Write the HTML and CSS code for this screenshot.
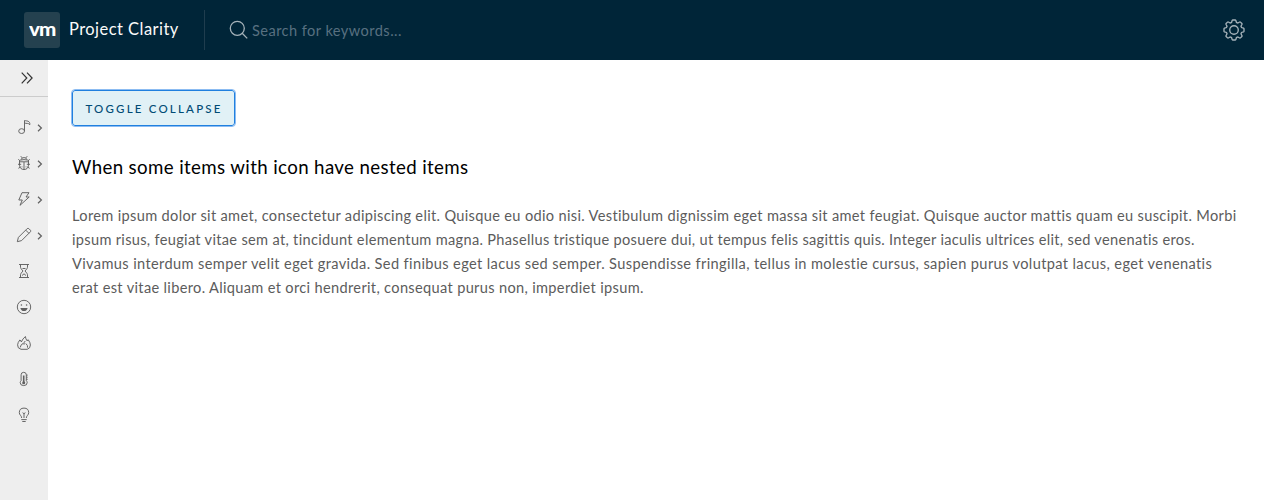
FILE: index.html
```
<!DOCTYPE html>
<html lang="en">
<head>
<meta charset="utf-8">
<title>Project Clarity</title>
<link rel="stylesheet" href="styles.css">
</head>
<body>
<header class="header">
  <a class="branding"><span class="logo"><span class="logo-text">vm</span></span><span class="title">Project Clarity</span></a>
  <div class="search">
    <svg class="search-icon" viewBox="0 0 20 20"><circle cx="8.3" cy="8.3" r="7"/><path d="M13.2 13.2L18.2 18.4"/></svg>
    <span class="placeholder">Search for keywords...</span>
  </div>
  <svg class="settings" viewBox="0 0 36 36"><circle cx="18" cy="18" r="6.4"/><path d="M32.3 15.2L29.3 14.3L28.5 12.3L30 9.5Q30.3 8.8 29.8 8.3L27.7 6.2Q27.2 5.7 26.5 6L23.7 7.5L21.7 6.7L20.8 3.7Q20.5 3 19.7 3H16.3Q15.5 3 15.2 3.7L14.3 6.7L12.3 7.5L9.5 6Q8.8 5.7 8.3 6.2L6.2 8.3Q5.7 8.8 6 9.5L7.5 12.3L6.7 14.3L3.7 15.2Q3 15.5 3 16.3V19.7Q3 20.5 3.7 20.8L6.7 21.7L7.5 23.7L6 26.5Q5.7 27.2 6.2 27.7L8.3 29.8Q8.8 30.3 9.5 30L12.3 28.5L14.3 29.3L15.2 32.3Q15.5 33 16.3 33H19.7Q20.5 33 20.8 32.3L21.7 29.3L23.7 28.5L26.5 30Q27.2 30.3 27.7 29.8L29.8 27.7Q30.3 27.2 30 26.5L28.5 23.7L29.3 21.7L32.3 20.8Q33 20.5 33 19.7V16.3Q33 15.5 32.3 15.2Z"/></svg>
</header>
<div class="layout">
  <nav class="sidenav">
    <div class="trigger"><svg viewBox="0 0 12 12"><path d="M.7.7L5.8 6L.7 11.3M6 .7L11.1 6L6 11.3"/></svg></div>
    <ul class="items">
      <li class="item"><svg class="icon" viewBox="0 0 16 16"><ellipse cx="5.6" cy="12.1" rx="2.9" ry="2.4"/><path d="M8.5 12.1V1.5C10.3 2.2 14.3 1.3 13.8 5.8M8.5 4C10.3 4.8 12.5 3.7 13.8 5.8"/></svg><svg class="caret" viewBox="0 0 6 8"><path d="M1 .8L4.4 4L1 7.2"/></svg></li>
      <li class="item"><svg class="icon" viewBox="0 0 16 16"><path d="M5.3 4.6Q5.3 2.6 8 2.6T10.7 4.6M4.8 1.2L6 2.8M11.2 1.2L10 2.8M3.5 5.2Q8 4 12.5 5.2V10.2Q12 14.5 8 14.5T3.5 10.2ZM3.5 6.8H12.5M8 7V14.3M2.3 4.3L3.5 5.5M13.7 4.3L12.5 5.5M2 9.3H5.2M10.8 9.3H14M2.4 13.3L4.5 12M13.6 13.3L11.5 12M6 11.5V12.3M10 11.5V12.3"/></svg><svg class="caret" viewBox="0 0 6 8"><path d="M1 .8L4.4 4L1 7.2"/></svg></li>
      <li class="item"><svg class="icon" viewBox="0 0 16 16"><path d="M6 1.7H13L10 6H13.2L4 14.3L6.3 9H2.8Z"/></svg><svg class="caret" viewBox="0 0 6 8"><path d="M1 .8L4.4 4L1 7.2"/></svg></li>
      <li class="item"><svg class="icon" viewBox="0 0 16 16"><path d="M2.4 10.4L11.2 1.6Q12 .9 12.8 1.6L14.5 3.3Q15.1 4 14.5 4.7L5.6 13.6L1.3 14.7ZM9.7 3.1L12.9 6.3"/></svg><svg class="caret" viewBox="0 0 6 8"><path d="M1 .8L4.4 4L1 7.2"/></svg></li>
      <li class="item"><svg class="icon" viewBox="0 0 16 16"><path d="M3 1.5H13M3 14.5H13M4.5 1.5V4.3Q4.5 5.4 7 8Q4.5 10.6 4.5 11.7V14.5M11.5 1.5V4.3Q11.5 5.4 9 8Q11.5 10.6 11.5 11.7V14.5M6 12.5L8 10.8L10 12.5M6.5 5.5H9.5"/></svg></li>
      <li class="item"><svg class="icon" viewBox="0 0 16 16"><circle cx="8" cy="8" r="6.7"/><g class="solid"><circle cx="5.4" cy="6" r=".8"/><circle cx="10.6" cy="6" r=".8"/><path d="M4.4 9H11.6Q11 12.1 8 12.1T4.4 9Z"/></g></svg></li>
      <li class="item"><svg class="icon" viewBox="0 0 16 16"><path d="M5 14.3Q1.3 13.4 1.6 9.8Q1.8 7.5 3.8 5Q5.3 5.5 5.3 7Q6.7 3.7 9.4 1.5Q9.7 4 11 5.8L12.2 4.7Q14.4 7.7 14.4 10Q14.4 13.4 11.2 14.3ZM4.2 12.4Q5 8.8 7.2 8.5L8 9.4Q7.8 6.8 9.3 6M9.8 8.5Q12 10.3 11.6 12.7"/></svg></li>
      <li class="item"><svg class="icon" viewBox="0 0 16 16"><path d="M5.1 9.8V3.8Q5.1 1.3 7.7 1.3T10.3 3.8V9.8Q11.2 10.5 11.2 11.6Q11.2 14.6 7.7 14.6T4.2 11.6Q4.2 10.5 5.1 9.8ZM10.3 4.1H11.7M10.3 6.2H11.7M10.3 8.3H11.7"/><path class="mercury" d="M7.7 4.5V11"/><circle class="solid" cx="7.7" cy="11.7" r="1.5"/></svg></li>
      <li class="item"><svg class="icon" viewBox="0 0 16 16"><path d="M5.7 11Q5.6 9.5 4.6 8.5Q3.3 7.2 3.3 5.6Q3.4 1.1 8 1.1T12.7 5.6Q12.7 7.2 11.4 8.5Q10.4 9.5 10.3 11M5.3 12.6H10.7M6.3 14.5H9.7M8 11V6.7L6.6 5.7M8 6.7L9.4 5.7"/></svg></li>
    </ul>
  </nav>
  <main class="content">
    <button class="toggle">Toggle collapse</button>
    <h4 class="heading">When some items with icon have nested items</h4>
    <p class="copy">
      <span class="line line-a">Lorem ipsum dolor sit amet, consectetur adipiscing elit. Quisque eu odio nisi. Vestibulum dignissim eget massa sit amet feugiat. Quisque auctor mattis quam eu suscipit. Morbi</span>
      <span class="line line-b">ipsum risus, feugiat vitae sem at, tincidunt elementum magna. Phasellus tristique posuere dui, ut tempus felis sagittis quis. Integer iaculis ultrices elit, sed venenatis eros.</span>
      <span class="line line-c">Vivamus interdum semper velit eget gravida. Sed finibus eget lacus sed semper. Suspendisse fringilla, tellus in molestie cursus, sapien purus volutpat lacus, eget venenatis</span>
      <span class="line line-d">erat est vitae libero. Aliquam et orci hendrerit, consequat purus non, imperdiet ipsum.</span>
    </p>
  </main>
</div>
</body>
</html>
```
FILE: styles.css
```
* { box-sizing: border-box; }
body { margin: 0; height: 500px; display: flex; flex-direction: column; overflow: hidden; background: #fff; font-family: Lato, "Open Sans", sans-serif; font-size: 14.6px; color: #5c5c5c; }
svg { display: block; flex: none; fill: none; stroke: currentColor; }
.header { flex: none; height: 60px; display: flex; align-items: center; background: #002538; padding-right: 18px; }
.branding { display: flex; align-items: center; width: 205px; height: 40px; padding-left: 24px; border-right: 1px solid #1f3d4e; }
.logo { display: flex; justify-content: center; width: 36px; height: 36px; border-radius: 3px; background: #24414f; color: #fff; font-size: 19px; font-weight: 900; line-height: 33px; letter-spacing: -1px; }
.logo-text { transform: scaleX(1.08); padding-left: 1px; }
.title { margin-left: 9px; padding-bottom: 2px; color: #fafafa; font-size: 16.5px; line-height: 24px; letter-spacing: .45px; white-space: nowrap; }
.search { flex: 1; display: flex; align-items: center; padding-left: 24px; }
.search-icon { width: 20px; height: 20px; color: #a6b3ba; stroke-width: 1.3; }
.placeholder { margin-left: 3px; color: #587080; letter-spacing: .44px; }
.settings { width: 24px; height: 24px; color: #a6b3ba; stroke-width: 2; }
.layout { flex: 1; display: flex; min-height: 0; }
.sidenav { width: 48px; background: #eee; }
.trigger { height: 37px; padding: 12px 0 0 21px; border-bottom: 1px solid #ccc; color: #333; }
.trigger svg { width: 12px; height: 12px; stroke-width: 1.2; }
.items { list-style: none; margin: 0; padding: 12px 0 0; }
.item { height: 36px; padding-left: 16px; display: flex; align-items: center; gap: 5px; color: #606060; }
.icon { width: 16px; height: 16px; stroke-width: .95; }
.caret { width: 6px; height: 8px; stroke-width: 1.2; position: relative; top: 1px; }
.solid { fill: currentColor; stroke: none; }
.mercury { stroke-width: 1.6; }
.content { flex: 1; padding: 30px 24px 0; }
.toggle { display: block; width: 163px; height: 36px; margin: 0; padding: 0 0 0 1px; border: 1px solid #2080df; border-radius: 3px; outline: 1px solid #8cbcf2; background: #e1f1f6; color: #004b75; font: 500 11.5px Lato, sans-serif; letter-spacing: 2.2px; text-transform: uppercase; }
.heading { margin: 29px 0 0; color: #000; font-size: 18.7px; font-weight: 400; line-height: 24px; letter-spacing: .37px; }
.copy { margin: 25px 0 0; line-height: 24px; }
.line { display: block; width: max-content; white-space: nowrap; }
.line-a { letter-spacing: .33px; }
.line-b { letter-spacing: .31px; }
.line-c { letter-spacing: .37px; }
.line-d { letter-spacing: .33px; }
```
